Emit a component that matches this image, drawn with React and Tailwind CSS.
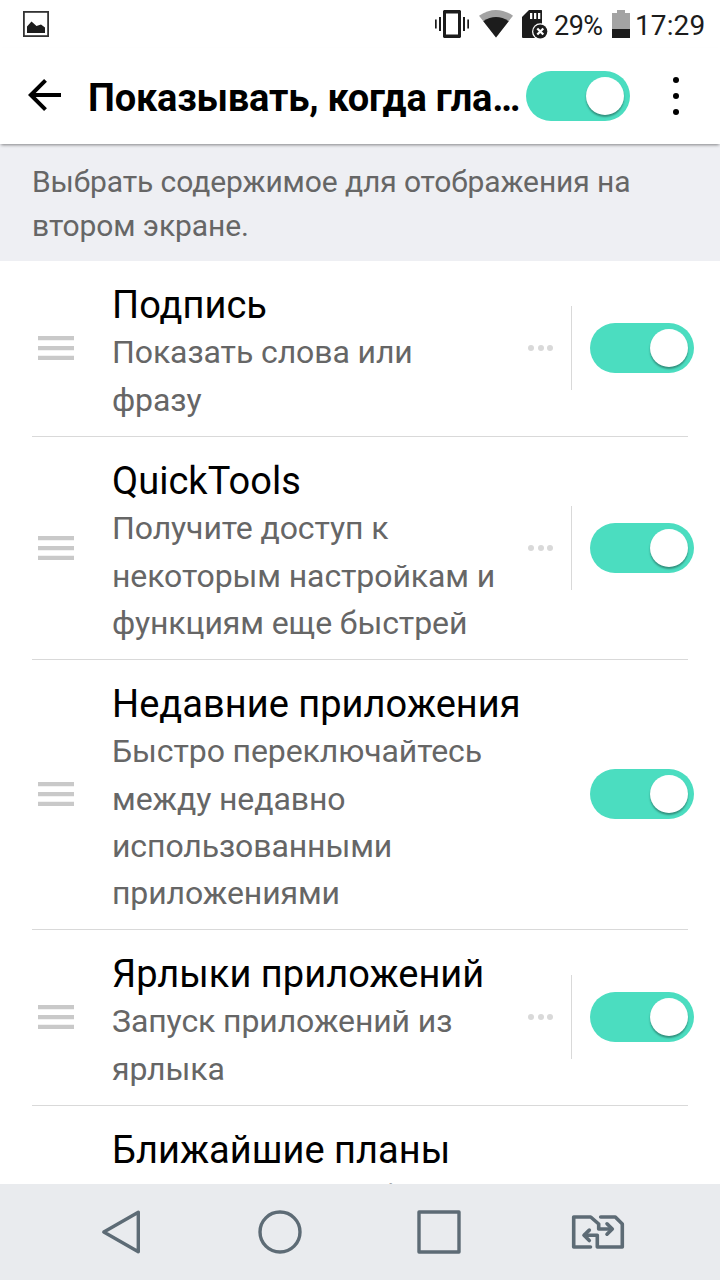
import React, { useState } from 'react';

const ITEMS = [
    {
        id: 'signature',
        title: 'Подпись',
        text: 'Показать слова или фразу',
        height: 'h-[176px]',
        settings: true
    },
    {
        id: 'quicktools',
        title: 'QuickTools',
        text: 'Получите доступ к некоторым настройкам и функциям еще быстрей',
        height: 'h-[223px]',
        settings: true
    },
    {
        id: 'recent',
        title: 'Недавние приложения',
        text: 'Быстро переключайтесь между недавно использованными приложениями',
        height: 'h-[270px]',
        settings: false
    },
    {
        id: 'shortcuts',
        title: 'Ярлыки приложений',
        text: 'Запуск приложений из ярлыка',
        height: 'h-[176px]',
        settings: true
    },
    {
        id: 'plans',
        title: 'Ближайшие планы',
        text: 'Показать план работы на ближайшие дни',
        height: 'h-[223px]',
        settings: false
    }
];

const Switch = ({ checked, onChange }) => (
    <button
        type="button"
        role="switch"
        aria-checked={checked}
        onClick={() => onChange(!checked)}
        className={`flex h-[50px] w-[104px] shrink-0 items-center rounded-full px-1.5 ${checked ? 'justify-end bg-[#4bddc0]' : 'justify-start bg-gray-300'}`}
    >
        <span className="h-[38px] w-[38px] rounded-full bg-white shadow-[0_2px_2px_rgba(0,0,0,0.35)]" />
    </button>
);

const StatusBar = () => (
    <div className="flex h-12 shrink-0 items-center pl-[23px] text-[#1c1c1c]">
        <svg width="26" height="26" viewBox="0 0 26 26">
            <rect x="0.9" y="0.9" width="24.2" height="24.2" fill="none" stroke="#333" strokeWidth="1.8" />
            <path d="M4 22V15.500L8.500 10.500L13.500 15L18 13.500L22 16.500V22Z" fill="currentColor" />
        </svg>
        <svg className="ml-[386px]" width="34" height="28" viewBox="0 0 34 28" fill="currentColor">
            <path fillRule="evenodd" d="M9 0H25L26 1V27L25 28H9L8 27V1ZM11 3.500V24.500H23V3.500Z" />
            <path d="M0 9.500H1.700V18.500H0ZM4 7H6V21H4ZM28 7H30V21H28ZM32.300 9.500H34V18.500H32.300Z" />
        </svg>
        <svg className="ml-2.5" width="34" height="28" viewBox="0 0 34 28">
            <path d="M0 5.700Q17 -5.700 34 5.700L17 27.500Z" fill="#a3a3a3" />
            <path d="M4.300 11.200Q17 3 29.700 11.200L17 27.500Z" fill="#1c1c1c" />
        </svg>
        <svg className="ml-[9px]" width="26" height="30" viewBox="0 0 26 30">
            <path d="M7 1H19.500Q20 1 20 1.500V28Q20 29 19 29H1Q0 29 0 28V8Z" fill="#1c1c1c" />
            <path d="M8 4H10.300V10H8ZM12 4H14.300V10H12ZM16 4H18.300V10H16Z" fill="#fff" />
            <circle cx="18.300" cy="22.500" r="8.300" fill="#fff" />
            <circle cx="18.300" cy="22.500" r="7" fill="#1c1c1c" />
            <path d="M15.300 19.500L21.300 25.500M21.300 19.500L15.300 25.500" stroke="#fff" strokeWidth="2.200" />
        </svg>
        <span className="ml-1.5 w-[49px] whitespace-nowrap pt-[3px] text-[27px] leading-8 tracking-[-0.5px]">29%</span>
        <svg className="ml-[9px]" width="18" height="28" viewBox="0 0 18 28">
            <path d="M5 0H13V3H18V19H0V3H5Z" fill="#a3a3a3" />
            <path d="M0 19H18V28H0Z" fill="#1c1c1c" />
        </svg>
        <span className="ml-[5px] pt-[3px] text-[28px] leading-8 tracking-[0.1px]">17:29</span>
    </div>
);

const Header = ({ checked, onChange }) => (
    <header className="relative z-10 flex h-24 shrink-0 items-center bg-white shadow-[0_2px_3px_-1px_rgba(0,0,0,0.45)]">
        <button type="button" className="-mt-0.5 ml-7">
            <svg width="34" height="34" viewBox="0 0 34 34" fill="none" stroke="#000" strokeWidth="4">
                <path d="M33 17H3M17.500 2.300L2.800 17L17.500 31.700" />
            </svg>
        </button>
        <h1 className="ml-[26px] w-[438px] whitespace-nowrap pt-1 text-[38px] font-bold leading-[48px] tracking-[-0.2px] text-black">
            Показывать, когда гла…
        </h1>
        <Switch checked={checked} onChange={onChange} />
        <button type="button" className="-mt-px ml-[43px] flex w-1.5 flex-col gap-2.5">
            <span className="h-1.5 w-1.5 rounded-full bg-black" />
            <span className="h-1.5 w-1.5 rounded-full bg-black" />
            <span className="h-1.5 w-1.5 rounded-full bg-black" />
        </button>
    </header>
);

const Row = ({ item, checked, onChange }) => (
    <li className={`mx-8 flex shrink-0 border-b border-[#d9d9d9] pb-px ${item.height}`}>
        <div className="flex w-20 shrink-0 items-center pl-1.5">
            <svg width="36" height="24" viewBox="0 0 36 24" fill="#c9c9c9">
                <path d="M0 0H36V4.300H0ZM0 9.900H36V14.200H0ZM0 19.700H36V24H0Z" />
            </svg>
        </div>
        <div className="min-w-0 flex-1 pt-5">
            <h2 className="whitespace-nowrap text-[38px] leading-[48px] tracking-[0.03px] text-black">{item.title}</h2>
            <p className="pr-2.5 pt-[0.4px] text-[32px] leading-[47.35px] tracking-[-0.1px] text-[#666]">{item.text}</p>
        </div>
        {item.settings && (
            <button type="button" className="ml-4 flex w-[43px] shrink-0 items-center gap-[3.500px]">
                <span className="h-1.5 w-1.5 rounded-full bg-[#d9d9d9]" />
                <span className="h-1.5 w-1.5 rounded-full bg-[#d9d9d9]" />
                <span className="h-1.5 w-1.5 rounded-full bg-[#d9d9d9]" />
            </button>
        )}
        {item.settings && <div className="h-[84px] w-px shrink-0 self-center bg-[#d9d9d9]" />}
        <div className="-mr-1.5 ml-[18px] flex shrink-0 items-center">
            <Switch checked={checked} onChange={onChange} />
        </div>
    </li>
);

const NavBar = () => (
    <nav className="grid h-24 shrink-0 grid-cols-4 place-items-center bg-[#e9ebee] px-[42px]">
        <button type="button">
            <svg width="45" height="46" viewBox="0 0 45 46" fill="none" stroke="#5d6b75" strokeWidth="3.400" strokeLinejoin="round">
                <path d="M39.300 3.200V42.800L4.800 23Z" />
            </svg>
        </button>
        <button type="button">
            <svg width="45" height="46" viewBox="0 0 45 46" fill="none" stroke="#5d6b75" strokeWidth="3.400">
                <circle cx="22" cy="23" r="20" />
            </svg>
        </button>
        <button type="button">
            <svg width="45" height="46" viewBox="0 0 45 46" fill="none" stroke="#5d6b75" strokeWidth="3.400" strokeLinejoin="round">
                <rect x="2" y="3" width="40" height="40" />
            </svg>
        </button>
        <button type="button">
            <svg width="55" height="46" viewBox="0 0 55 46" fill="none" stroke="#5d6b75" strokeWidth="3.600" strokeLinecap="round" strokeLinejoin="round">
                <path d="M19.500 38H2.700V8H19.700L27.700 15V20H40.500" />
                <path d="M36 14.800L41.300 20L36 25.200" />
                <path d="M29.700 8H44.300L51.300 15V38H26.300V26.300H13.500" />
                <path d="M18.300 21.100L13 26.300L18.300 31.500" />
            </svg>
        </button>
    </nav>
);

const App = () => {
    const [enabled, setEnabled] = useState(true);
    const [checked, setChecked] = useState({
        signature: true,
        quicktools: true,
        recent: true,
        shortcuts: true,
        plans: true
    });

    const toggle = (id, value) => {
        setChecked(prev => ({ ...prev, [id]: value }));
    };

    return (
        <div className="flex h-[1280px] w-[720px] flex-col overflow-hidden bg-white font-[Roboto,sans-serif]">
            <StatusBar />
            <Header checked={enabled} onChange={setEnabled} />
            <p className="h-[117px] shrink-0 bg-[#eeeff3] px-8 pt-4 text-[30px] leading-[44px] tracking-[-0.1px] text-[#666]">
                Выбрать содержимое для отображения на втором экране.
            </p>
            <ul className="flex min-h-0 flex-1 flex-col overflow-hidden">
                {ITEMS.map(item => (
                    <Row
                        key={item.id}
                        item={item}
                        checked={checked[item.id]}
                        onChange={value => toggle(item.id, value)}
                    />
                ))}
            </ul>
            <NavBar />
        </div>
    );
};

export default App;
